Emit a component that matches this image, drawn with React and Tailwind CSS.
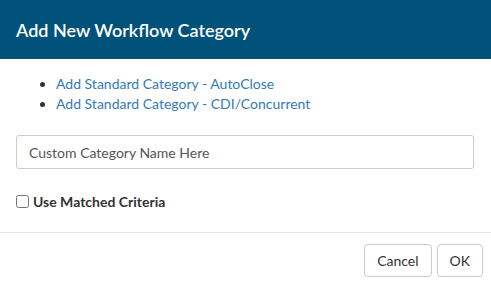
export default function App() {
  return (
    <div
      className="w-[491px] h-[290px] bg-white"
      style={{ fontFamily: 'Lato, "Open Sans", sans-serif' }}
    >
      {/* Header */}
      <div className="h-[59px] bg-[#00527a] flex items-center px-4">
        <h2 className="text-white text-[18px] font-semibold leading-none">
          Add New Workflow Category
        </h2>
      </div>

      {/* Body */}
      <div className="px-4 pt-[15px] pb-[20px]">
        <ul className="list-disc pl-[40px] text-[14px] leading-[20px] text-[#337ab7] marker:text-[#333]">
          <li>
            <a href="#">Add Standard Category - AutoClose</a>
          </li>
          <li>
            <a href="#">Add Standard Category - CDI/Concurrent</a>
          </li>
        </ul>

        <input
          type="text"
          placeholder="Custom Category Name Here"
          className="mt-[21px] w-[458px] h-[34px] px-3 border border-[#ccc] rounded-[3px] text-[14px] text-[#555] placeholder:text-[#555] outline-none"
        />

        <label className="mt-[22px] flex items-center gap-[4px] text-[14px] font-bold text-[#333]">
          <input type="checkbox" className="w-[13px] h-[13px] m-0" />
          Use Matched Criteria
        </label>
      </div>

      {/* Footer */}
      <div className="border-t border-[#e5e5e5] flex justify-end gap-[5px] pt-[11px] pr-2">
        <button className="h-[33px] px-3 border border-[#ccc] rounded-[4px] bg-white text-[14px] text-[#333]">
          Cancel
        </button>
        <button className="h-[33px] px-3 border border-[#ccc] rounded-[4px] bg-white text-[14px] text-[#333]">
          OK
        </button>
      </div>
    </div>
  );
}
